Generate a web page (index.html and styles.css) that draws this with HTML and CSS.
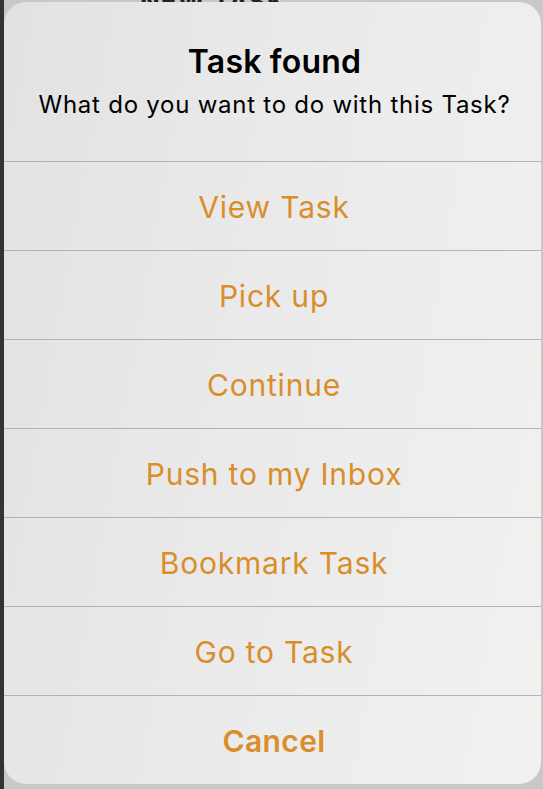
FILE: index.html
```html
<!DOCTYPE html>
<html lang="en">
<head>
<meta charset="utf-8">
<title>Task found</title>
<link rel="stylesheet" href="styles.css">
</head>
<body>
<div class="backdrop">
  <div class="behind-text">NEW TASK</div>
  <div class="alert">
    <div class="alert-header">
      <div class="alert-title">Task found</div>
      <div class="alert-message">What do you want to do with this Task?</div>
    </div>
    <div class="alert-actions">
      <div class="action">View Task</div>
      <div class="action">Pick up</div>
      <div class="action">Continue</div>
      <div class="action">Push to my Inbox</div>
      <div class="action">Bookmark Task</div>
      <div class="action">Go to Task</div>
      <div class="action action-cancel">Cancel</div>
    </div>
  </div>
</div>
</body>
</html>
```
FILE: styles.css
```css
* { box-sizing: border-box; }
html, body { margin: 0; padding: 0; }
body {
  width: 543px;
  height: 789px;
  overflow: hidden;
  font-family: Inter, "Liberation Sans", sans-serif;
  background: #c6c6c6;
}
.backdrop {
  position: relative;
  width: 543px;
  height: 789px;
  padding: 2px 2px 5px 4px;
  background: linear-gradient(to right, #333 0, #333 4px, #c8c8c8 4px);
}
.behind-text {
  position: absolute;
  left: 140px;
  top: -14px;
  font-size: 26px;
  font-weight: 700;
  color: #222;
  letter-spacing: 1px;
}
.alert {
  position: relative;
  height: 782px;
  border-radius: 22px;
  overflow: hidden;
  background: linear-gradient(100deg, #e2e2e2 0%, #eaeaea 45%, #f1f1f0 100%);
  display: flex;
  flex-direction: column;
}
.alert-header {
  height: 160px;
  padding: 41px 0 0 4px;
  text-align: center;
  color: #000;
}
.alert-title {
  font-size: 32px;
  font-weight: 600;
  line-height: 38px;
  letter-spacing: 0.2px;
}
.alert-message {
  font-size: 24px;
  line-height: 48px;
  font-weight: 400;
  letter-spacing: 0.75px;
}
.alert-actions {
  display: flex;
  flex-direction: column;
}
.action {
  height: 89px;
  border-top: 1px solid #b3b3b3;
  display: flex;
  align-items: center;
  justify-content: center;
  font-size: 30px;
  letter-spacing: 0.8px;
  color: #d98e2b;
  padding: 1px 0 0 3px;
}
.action-cancel {
  font-weight: 600;
  letter-spacing: 0.4px;
}
```
